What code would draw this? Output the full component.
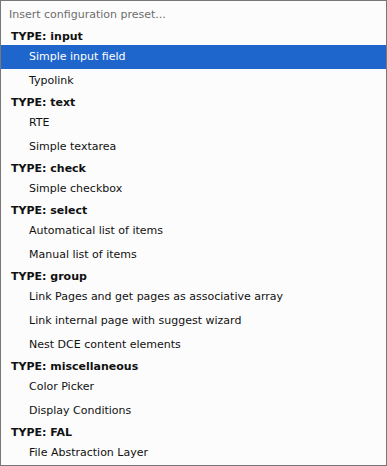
import React from "react";

const groups = [
  { type: "input", items: ["Simple input field", "Typolink"] },
  { type: "text", items: ["RTE", "Simple textarea"] },
  { type: "check", items: ["Simple checkbox"] },
  { type: "select", items: ["Automatical list of items", "Manual list of items"] },
  {
    type: "group",
    items: [
      "Link Pages and get pages as associative array",
      "Link internal page with suggest wizard",
      "Nest DCE content elements",
    ],
  },
  { type: "miscellaneous", items: ["Color Picker", "Display Conditions"] },
  { type: "FAL", items: ["File Abstraction Layer"] },
];

const App = () => {
  return (
    <div
      className="w-[387px] h-[466px] bg-[#fcfcfc] border border-[#777777] text-[11px] text-[#111111] overflow-hidden"
      style={{ fontFamily: '"DejaVu Sans", Verdana, sans-serif' }}
    >
      {/* placeholder option */}
      <div className="h-[26px] pt-[2px] leading-[24px] pl-[8px] text-[#6d6d6d]">
        Insert configuration preset...
      </div>

      {groups.map((group) => (
        <div key={group.type}>
          <div className="h-[18px] pt-[2px] leading-[16px] pl-[10px] font-bold">
            TYPE: {group.type}
          </div>
          {group.items.map((item) => {
            const isSelected = item === "Simple input field";
            return (
              <div
                key={item}
                className={`h-[24px] leading-[24px] pl-[28px] whitespace-nowrap ${
                  isSelected ? "bg-[#1f66cc] text-white" : ""
                }`}
              >
                {item}
              </div>
            );
          })}
        </div>
      ))}
    </div>
  );
};

export default App;
